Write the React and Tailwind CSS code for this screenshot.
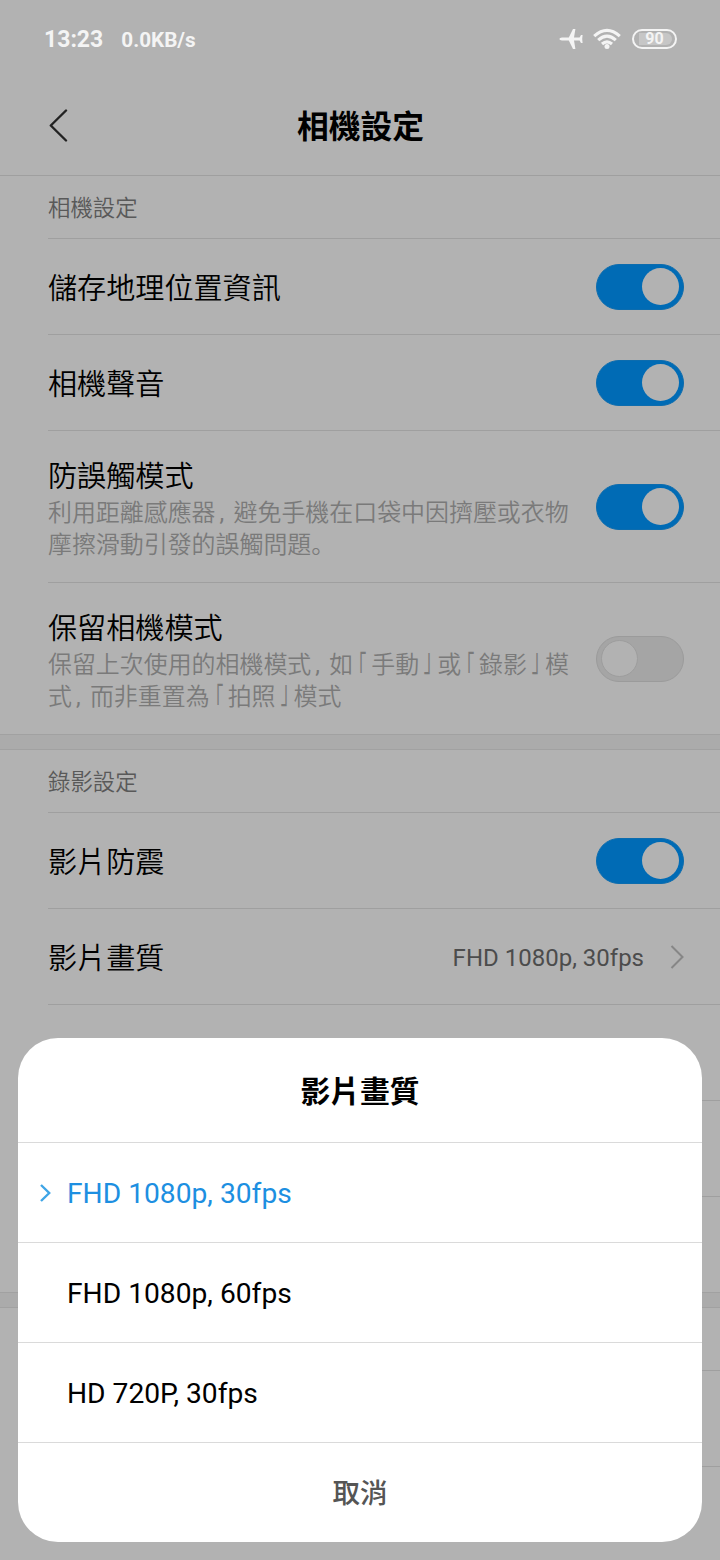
import React from "react";

const topSettings = [
  { title: "儲存地理位置資訊", on: true },
  { title: "相機聲音", on: true },
  {
    title: "防誤觸模式",
    lines: [
      "利用距離感應器,避免手機在口袋中因擠壓或衣物",
      "摩擦滑動引發的誤觸問題。",
    ],
    on: true,
  },
  {
    title: "保留相機模式",
    lines: [
      "保留上次使用的相機模式,如「手動」或「錄影」模",
      "式,而非重置為「拍照」模式",
    ],
    on: false,
    last: true,
  },
];

const options = [
  { label: "FHD 1080p, 30fps", selected: true },
  { label: "FHD 1080p, 60fps" },
  { label: "HD 720P, 30fps" },
];

export default function App() {
  return (
    <div className="relative h-[1560px] w-[720px] overflow-hidden bg-[#b2b2b2] font-[Roboto,'Noto_Sans_CJK_TC',sans-serif] text-black">
      <StatusBar />

      <header className="flex h-[98px] items-center border-b border-[#9f9f9f] pl-[48px]">
        <svg width="20" height="34" viewBox="0 0 20 34" className="mb-[4px]" fill="none" stroke="#222" strokeWidth="2.4" strokeLinecap="round" strokeLinejoin="round">
          <path d="M18 2.5 L2.8 17.5 L18 32.5" />
        </svg>
        <h1 className="mr-[67px] flex-1 text-center text-[31.8px] leading-[48px] font-bold">
          相機設定
        </h1>
      </header>

      <SectionLabel>相機設定</SectionLabel>
      {topSettings.map((s) => (
        <SettingRow key={s.title} {...s} />
      ))}
      <Gap />

      <SectionLabel>錄影設定</SectionLabel>
      <SettingRow title="影片防震" on />
      <SettingRow title="影片畫質" value="FHD 1080p, 30fps" />
      <SettingRow />
      <SettingRow />
      <SettingRow last />
      <Gap />

      <SectionLabel />
      <SettingRow />

      <QualityDialog />
    </div>
  );
}

function StatusBar() {
  return (
    <div className="flex h-[78px] items-center justify-between pr-[43px] pl-[44px] text-[#f4f4f4]">
      <div className="flex items-baseline gap-[18px] pt-[2px] font-bold">
        <span className="text-[23px] leading-[30px]">13:23</span>
        <span className="text-[20.7px] leading-[30px]">0.0KB/s</span>
      </div>
      <div className="flex items-center">
        <svg width="25" height="22" viewBox="0 0 25 22" fill="currentColor">
          <path d="M0.3 11 Q0.6 9.6 3 9.5 L9.8 9.4 L14 1 L16.4 1 L15 9.4 L20.6 9.4 L22 7 L23.6 7 L23.2 11 L23.6 15 L22 15 L20.6 12.6 L15 12.6 L16.4 21 L14 21 L9.8 12.6 L3 12.5 Q0.6 12.4 0.3 11 Z" />
        </svg>
        <svg className="ml-[9px]" width="28" height="22" viewBox="0 0 28 22" fill="none" stroke="currentColor" strokeWidth="3.1">
          <path d="M1.2 8.2 Q14 -3.6 26.8 8.2" />
          <path d="M5.2 12.2 Q14 4.2 22.8 12.2" />
          <path d="M9 16 Q14 11.6 19 16" />
          <circle cx="14" cy="18.6" r="2.5" fill="currentColor" stroke="none" />
        </svg>
        <div className="ml-[11px] flex h-[20px] w-[45px] items-center justify-center rounded-full border-2 border-[#f4f4f4] py-[2px] pr-[3px] pl-[5px]">
          <div className="flex h-full w-full items-center justify-center rounded-r-full rounded-l-[3px] bg-[#c6c6c6] pr-[2px] text-[16px] leading-none font-bold">
            90
          </div>
        </div>
      </div>
    </div>
  );
}

function SectionLabel({ children }) {
  return (
    <div className="ml-12 flex h-[63px] items-center border-b border-[#9f9f9f] pt-[3px] text-[22.4px] font-[350] text-[#595959]">
      {children}
    </div>
  );
}

function Gap() {
  return <div className="h-[15px] border-b border-[#a1a1a1] bg-[#ababab]" />;
}

function SettingRow({ title, lines, value, on, last }) {
  return (
    <div
      className={`flex items-center border-b pr-9 ${lines ? "h-[152px]" : "h-24"} ${
        last ? "border-[#a1a1a1] pl-12" : "ml-12 border-[#9f9f9f]"
      }`}
    >
      <div className="flex-1 pt-[5px] font-[350]">
        <div className="text-[29.1px] leading-[40px]">{title}</div>
        {lines && (
          <div className="text-[23.95px] leading-8 whitespace-nowrap text-[#7a7a7a]">
            {lines.map((line) => (
              <p key={line} className="h-8">
                <Punctuated text={line} />
              </p>
            ))}
          </div>
        )}
      </div>
      {value && (
        <>
          <span className="pt-[3px] text-[24px] text-[#4c4c4c]">{value}</span>
          <svg className="ml-[26px]" width="14" height="24" viewBox="0 0 14 24" fill="none" stroke="#868686" strokeWidth="2">
            <path d="M1.5 1 L12.5 12 L1.5 23" />
          </svg>
        </>
      )}
      {on !== undefined && <Toggle on={on} />}
    </div>
  );
}

// Commas and corner brackets take three quarters of a full-width cell
function Punctuated({ text }) {
  return text.split(/([,。「」])/).map((part, i) => {
    if (part === ",") {
      return (
        <span key={i} className="inline-block w-[18px] pl-[4px] font-normal">
          ,
        </span>
      );
    }
    if (part === "。") {
      return (
        <span key={i} className="font-['Noto_Sans_CJK_SC'] leading-none">
          。
        </span>
      );
    }
    if (part === "「") {
      return (
        <span
          key={i}
          className="inline-block h-8 w-[18px] translate-y-[3px] scale-x-[0.7] scale-y-[1.35] pl-[3px] align-top leading-8 font-normal [font-feature-settings:'halt']"
        >
          「
        </span>
      );
    }
    if (part === "」") {
      return (
        <span
          key={i}
          className="inline-block h-8 w-[18px] -translate-y-[5px] scale-x-[0.7] scale-y-[1.35] pl-[3px] align-top leading-8 font-normal [font-feature-settings:'halt']"
        >
          」
        </span>
      );
    }
    return part;
  });
}

function Toggle({ on }) {
  return (
    <div
      className={`flex h-[46px] w-[88px] items-center rounded-full border px-1 ${
        on
          ? "justify-end border-[#0c6cae] bg-[#006bb5]"
          : "border-[#9b9b9b] bg-[#a5a5a5]"
      }`}
    >
      <div
        className={`size-[37px] rounded-full bg-[#b2b2b2] ${on ? "" : "border border-[#9d9d9d]"}`}
      />
    </div>
  );
}

function QualityDialog() {
  return (
    <div className="absolute top-[1038px] left-[18px] w-[684px] overflow-hidden rounded-[40px] bg-white">
      <h2 className="flex h-[105px] items-center justify-center border-b border-[#dadada] pt-[4px] text-[29.8px] font-bold">
        影片畫質
      </h2>
      {options.map((o) => (
        <div
          key={o.label}
          className={`flex h-[100px] items-center border-b border-[#dadada] pl-[21px] text-[28.2px] ${
            o.selected ? "text-[#1d8fe1]" : "text-black"
          }`}
        >
          <div className="w-[28px]">
            {o.selected && (
              <svg width="13" height="20" viewBox="0 0 13 20" fill="none" stroke="#3fa5e6" strokeWidth="2.4">
                <path d="M2 2 L10.2 10 L2 18" />
              </svg>
            )}
          </div>
          <span className="pt-[4px]">{o.label}</span>
        </div>
      ))}
      <button className="flex h-[99px] w-full items-center justify-center pt-[2px] text-[27.5px] font-medium text-[#555]">
        取消
      </button>
    </div>
  );
}
